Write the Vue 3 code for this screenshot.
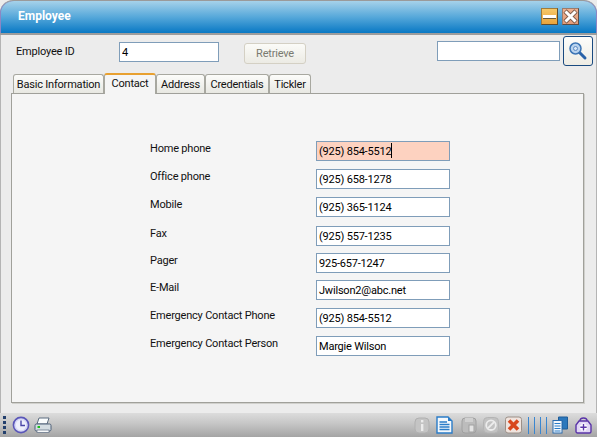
<template>
  <div class="window">
    <div class="titlebar">
      <span class="title">Employee</span>
      <div class="winbtn minimize"><span class="dash"></span></div>
      <div class="winbtn closebtn">
        <svg width="17" height="17" viewBox="0 0 17 17">
          <path d="M3 3 L14 14 M14 3 L3 14" stroke="#7d5a48" stroke-width="4.6" />
          <path d="M3.5 3.5 L13.5 13.5 M13.5 3.5 L3.5 13.5" stroke="#fff" stroke-width="3" />
        </svg>
      </div>
    </div>

    <div class="content">
      <div class="topbar">
        <label class="id-label">Employee ID</label>
        <input class="field id-field" value="4" />
        <button class="retrieve">Retrieve</button>
        <input class="field search-field" />
        <button class="search-btn">
          <svg width="20" height="20" viewBox="0 0 20 20">
            <path d="M11.5 11.5 L17 17" stroke="#2a62a8" stroke-width="3" stroke-linecap="round" />
            <circle cx="7.5" cy="7.5" r="5.5" fill="#b9d3ee" stroke="#3b74b4" stroke-width="1.5" />
            <circle cx="7.5" cy="7.5" r="2" fill="#dbe8f6" stroke="#5d8cc4" />
          </svg>
        </button>
      </div>

      <div class="tabs">
        <div v-for="tab in tabs" :key="tab" class="tab" :class="{ active: tab === 'Contact' }">{{ tab }}</div>
      </div>

      <div class="panel">
        <div class="form">
          <template v-for="row in rows" :key="row.label">
            <div class="form-label">{{ row.label }}</div>
            <div class="form-value">
              <div class="field value-field" :class="{ focused: row.focused }">{{ row.value }}<span v-if="row.focused" class="caret"></span></div>
            </div>
          </template>
        </div>
      </div>
    </div>

    <div class="statusbar">
      <div class="grip"><i v-for="n in 4" :key="n"></i></div>
      <svg class="ico" width="18" height="18" viewBox="0 0 18 18">
        <circle cx="9" cy="9" r="7.6" fill="#d6d8f6" stroke="#5a56b8" stroke-width="1.6" />
        <circle cx="9" cy="9" r="5.2" fill="#eef0fc" />
        <path d="M9 4.5 V9.5 H13" fill="none" stroke="#4a46a8" stroke-width="1.4" />
      </svg>
      <svg class="ico printer" width="18" height="18" viewBox="0 0 18 18">
        <path d="M5 2 H15 L13 8 H3 Z" fill="#fafcfd" stroke="#5c6c80" />
        <rect x="1" y="8" width="16" height="7" rx="1.5" fill="#d4dce2" stroke="#4e6078" />
        <rect x="3" y="14" width="12" height="2.5" fill="#f6f8f9" stroke="#5c6c80" stroke-width="0.7" />
        <rect x="3.5" y="10" width="2.5" height="2" fill="#18c018" />
      </svg>
      <div class="spacer"></div>
      <svg class="ico info" width="16" height="18" viewBox="0 0 16 18">
        <rect x="1" y="2" width="14" height="15" rx="4" fill="#c4c4c4" stroke="#b0b0b0" />
        <rect x="7" y="4" width="2.4" height="2.4" fill="#ececec" />
        <rect x="7" y="8" width="2.4" height="7" fill="#ececec" />
      </svg>
      <svg class="ico doc" width="17" height="18" viewBox="0 0 17 18">
        <path d="M1 1 H12 L16 5 V17 H1 Z" fill="#f4f8fc" stroke="#2a7cc8" stroke-width="1.4" />
        <path d="M12 1 V5 H16 Z" fill="#2a7cc8" />
        <path d="M3.5 6 H11 M3.5 8.5 H13.5 M3.5 11 H13.5 M3.5 13.5 H13.5" stroke="#2a7cc8" stroke-width="1.3" />
      </svg>
      <svg class="ico save" width="16" height="18" viewBox="0 0 16 18">
        <rect x="1" y="2" width="14" height="15" rx="3" fill="#bcbcbc" stroke="#a0a0a0" />
        <rect x="4" y="2" width="8" height="4" fill="#d0d0d0" />
        <rect x="8" y="9" width="5" height="7" fill="#e4e4e4" stroke="#a0a0a0" />
      </svg>
      <svg class="ico ban" width="16" height="18" viewBox="0 0 16 18">
        <rect x="0.5" y="1.5" width="15" height="15.5" rx="4" fill="#c2c2c2" stroke="#b4b4b4" />
        <circle cx="8" cy="9.2" r="4.8" fill="none" stroke="#ececec" stroke-width="1.8" />
        <path d="M4.8 12.4 L11.2 6" stroke="#ececec" stroke-width="1.8" />
      </svg>
      <svg class="ico del" width="17" height="18" viewBox="0 0 17 18">
        <rect x="0.5" y="1" width="16" height="16" rx="2.5" fill="#f0e4de" stroke="#9c9088" />
        <path d="M4 4.5 L13 13.5 M13 4.5 L4 13.5" stroke="#d8481e" stroke-width="3.6" />
      </svg>
      <div class="bars"><i v-for="n in 4" :key="n"></i></div>
      <svg class="ico copy" width="16" height="18" viewBox="0 0 16 18">
        <path d="M6.5 1 H15.5 V13 H10 V4.5 H6.5 Z" fill="#2c78bc" stroke="#1f5c98" stroke-linejoin="round" />
        <rect x="1" y="4.5" width="9" height="12.5" fill="#f4f8fc" stroke="#2a6cb0" />
        <path d="M2.5 7.5 H8.5 M2.5 10 H8.5 M2.5 12.5 H8.5 M2.5 15 H8.5" stroke="#2a7cc8" />
      </svg>
      <svg class="ico bag" width="17" height="18" viewBox="0 0 17 18">
        <path d="M5 5 C5 1 12 1 12 5" fill="none" stroke="#5a34a8" stroke-width="1.5" />
        <path d="M4 5 H13 L16 9 V15.5 A1.5 1.5 0 0 1 14.5 17 H2.5 A1.5 1.5 0 0 1 1 15.5 V9 Z" fill="#e0d6f4" stroke="#5a34a8" stroke-width="1.4" />
        <path d="M8.5 7.5 V15 M4.8 11.2 H12.2" stroke="#fff" stroke-width="4" />
        <path d="M8.5 8 V14.4 M5.3 11.2 H11.7" stroke="#5a34a8" stroke-width="1.4" />
      </svg>
    </div>
  </div>
</template>

<script setup>
const tabs = ['Basic Information', 'Contact', 'Address', 'Credentials', 'Tickler'];

const rows = [
  { label: 'Home phone', value: '(925) 854-5512', focused: true },
  { label: 'Office phone', value: '(925) 658-1278' },
  { label: 'Mobile', value: '(925) 365-1124' },
  { label: 'Fax', value: '(925) 557-1235' },
  { label: 'Pager', value: '925-657-1247' },
  { label: 'E-Mail', value: 'Jwilson2@abc.net' },
  { label: 'Emergency Contact Phone', value: '(925) 854-5512' },
  { label: 'Emergency Contact Person', value: 'Margie Wilson' },
];
</script>

<style scoped>
.window {
  width: 597px;
  height: 437px;
  display: flex;
  flex-direction: column;
  box-sizing: border-box;
  overflow: hidden;
  font-family: Roboto, "Liberation Sans", Arial, sans-serif;
  font-size: 11px;
  letter-spacing: -0.2px;
  color: #111;
  background: #ececec;
}

.titlebar {
  height: 35px;
  flex: none;
  box-sizing: border-box;
  display: flex;
  align-items: center;
  padding: 0 18px 2px 18px;
  gap: 4px;
  color: #fff;
  background: linear-gradient(#a6d2ea, #56a8da 50%, #0878c4);
  border-top: 1px solid #9a9a9a;
  border-bottom: 2px solid #9c9c9c;
  border-radius: 13px 13px 0 0;
  box-shadow: inset 1px 0 0 #8c86c4, inset -1px 0 0 #8c86c4;
}

.title {
  font-weight: bold;
  font-size: 12px;
  letter-spacing: 0;
  margin-right: auto;
}

.winbtn {
  width: 17px;
  height: 17px;
  box-sizing: border-box;
  display: flex;
  align-items: center;
  justify-content: center;
}

.minimize {
  background: linear-gradient(#f6c868, #e8a43c);
  border: 1px solid #a07c3c;
  border-right-color: #5c4c30;
  border-bottom-color: #5c4c30;
}

.dash {
  width: 13px;
  height: 3px;
  background: #fff;
  box-shadow: 0 1px 0 #6c5a38;
}

.closebtn {
  background: linear-gradient(#eeb090, #e09a78);
  border: 1px solid #9c7c6c;
  border-right-color: #5c4c44;
  border-bottom-color: #5c4c44;
}

.closebtn svg {
  flex: none;
  margin: -1px;
}

.content {
  flex: 1;
  min-height: 0;
  display: flex;
  flex-direction: column;
  padding: 0 12px 10px 10px;
  border-left: 1px solid #b4b4b4;
  border-right: 1px solid #b4b4b4;
}

.topbar {
  height: 38px;
  flex: none;
  display: flex;
  align-items: flex-start;
  margin-right: -10px;
}

.id-label {
  width: 103px;
  margin: 9px 0 0 5px;
  line-height: 16px;
}

.field {
  box-sizing: border-box;
  height: 20px;
  border: 1px solid #7f9db9;
  background: #fff;
  font: inherit;
  letter-spacing: inherit;
  color: #000;
  padding: 0 2px;
  outline: none;
}

.id-field {
  width: 100px;
  margin-top: 7px;
}

.retrieve {
  width: 62px;
  height: 21px;
  margin: 8px 0 0 25px;
  border: 1px solid #d4d0c4;
  border-radius: 3px;
  background: linear-gradient(#fbfbf8, #ecebe4);
  color: #7a7a70;
  font: inherit;
  letter-spacing: inherit;
  padding: 0;
}

.search-field {
  width: 123px;
  margin: 6px 0 0 131px;
}

.search-btn {
  width: 30px;
  height: 30px;
  margin: 1px 0 0 3px;
  padding: 0;
  display: flex;
  align-items: center;
  justify-content: center;
  border: 1px solid #1a4a80;
  border-radius: 3px;
  background: linear-gradient(#fdfdfb, #eeece4);
}

.tabs {
  height: 20px;
  flex: none;
  display: grid;
  grid-template-columns: 91px 52px 49px 64px 42px;
  justify-content: start;
  align-items: end;
  margin-left: 2px;
  position: relative;
  z-index: 1;
}

.tab {
  box-sizing: border-box;
  height: 19px;
  line-height: 20px;
  text-align: center;
  border: 1px solid #a8a8a0;
  border-bottom: 0;
  border-radius: 3px 3px 0 0;
  background: linear-gradient(#fcfcfa, #e8e8e2);
  white-space: nowrap;
}

.tab.active {
  height: 21px;
  margin-bottom: -1px;
  line-height: 17px;
  background: #f5f5f5;
  border-top: 2px solid #e8a030;
}

.panel {
  flex: 1;
  min-height: 0;
  background: #f5f5f5;
  border: 1px solid #a0a09a;
  box-shadow: 1px 1px 0 #d0d0cc;
}

.form {
  display: grid;
  grid-template-columns: 166px 134px;
  grid-template-rows: 28px 28px 29px 27px 27px 28px 28px 20px;
  margin: 47px 0 0 138px;
}

.form-label {
  line-height: 16px;
}

.form-value {
  height: 20px;
}

.value-field {
  line-height: 19px;
  padding-left: 2px;
  white-space: nowrap;
}

.value-field.focused {
  background: #fdd2c0;
}

.caret {
  display: inline-block;
  width: 1px;
  height: 15px;
  background: #000;
  vertical-align: -3px;
}

.statusbar {
  height: 24px;
  flex: none;
  display: flex;
  align-items: center;
  padding: 0 5px 0 3px;
  background: linear-gradient(#dcdcdc, #c8c8c8 40%, #a4a4a4);
}

.grip {
  width: 3px;
  display: flex;
  flex-direction: column;
  gap: 2px;
  margin-right: 6px;
}

.grip i {
  display: block;
  width: 3px;
  height: 3px;
  background: #23406e;
}

.ico {
  flex: none;
  display: block;
}

.printer {
  margin-left: 4px;
}

.spacer {
  flex: 1;
}

.doc {
  margin-left: 6px;
}

.save {
  margin-left: 8px;
}

.ban {
  margin-left: 6px;
}

.del {
  margin-left: 6px;
}

.bars {
  display: flex;
  gap: 5px;
  margin-left: 6px;
}

.bars i {
  display: block;
  width: 1px;
  height: 17px;
  background: #3a86d0;
}

.copy {
  margin-left: 5px;
}

.bag {
  margin-left: 7px;
}
</style>

<style>
html, body {
  margin: 0;
  background: #fff;
}
</style>
